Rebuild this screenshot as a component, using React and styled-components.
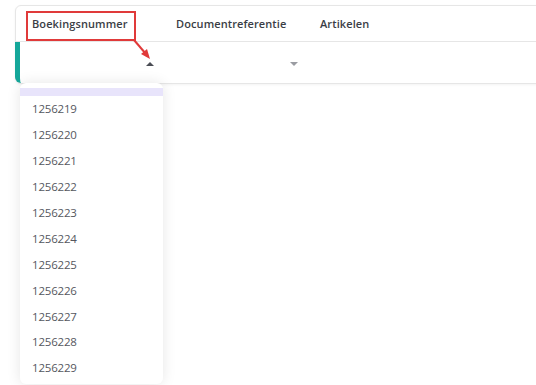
import React from "react";
import styled, { createGlobalStyle } from "styled-components";

const Global = createGlobalStyle`
  html, body { margin: 0; padding: 0; background: #fff; }
  body { font-family: "Open Sans", "Liberation Sans", sans-serif; overflow: hidden; }
  #root { width: 536px; height: 385px; overflow: hidden; }
`;

const Page = styled.div`
  padding: 5px 0 0 15px;
  width: 560px;
  position: relative;
`;

const Card = styled.div`
  border: 1px solid #e6e6e6;
  border-radius: 6px;
  background: #fff;
  box-shadow: 0 1px 3px rgba(0, 0, 0, 0.05);
`;

const HeaderRow = styled.div`
  display: grid;
  grid-template-columns: 144px 144px 1fr;
  height: 35px;
  padding-left: 4px;
  border-bottom: 1px solid #e6e6e6;
`;

const Tab = styled.div`
  display: flex;
  align-items: center;
  padding-left: 12px;
  font-size: 11px;
  font-weight: 600;
  color: #3a3d45;
  letter-spacing: 0.1px;
`;

const FilterRow = styled.div`
  display: grid;
  grid-template-columns: 144px 144px 1fr;
  height: 41px;
  border-left: 5px solid #15a79a;
  margin-left: -1px;
  border-bottom-left-radius: 6px;
`;

const Cell = styled.div`
  position: relative;
  display: flex;
  align-items: center;
  justify-content: flex-end;
  padding-right: 10px;
`;

const Caret = styled.span`
  width: 0;
  height: 0;
  border-left: 4px solid transparent;
  border-right: 4px solid transparent;
  ${(p) =>
    p.$up
      ? `border-bottom: 4px solid #4a4d55;`
      : `border-top: 4px solid #9a9ca2;`}
  margin-top: 2px;
`;

const Dropdown = styled.div`
  position: absolute;
  top: 41px;
  left: 0;
  width: 143px;
  height: 301px;
  background: #fff;
  border-radius: 6px;
  box-shadow: 0 0 14px rgba(0, 0, 0, 0.1);
  padding-top: 5px;
  box-sizing: border-box;
  z-index: 5;
`;

const Highlight = styled.div`
  height: 8px;
  background: #e8e4fb;
`;

const Option = styled.div`
  height: 25.9px;
  display: flex;
  align-items: center;
  padding-left: 12px;
  font-size: 11.5px;
  letter-spacing: -0.2px;
  color: #55575e;
`;

const Annotation = styled.div`
  position: absolute;
  left: 26px;
  top: 11px;
  width: 106px;
  height: 26px;
  border: 2px solid #e03a3a;
  pointer-events: none;
  z-index: 6;
`;

const Arrow = styled.svg`
  position: absolute;
  left: 128px;
  top: 36px;
  z-index: 6;
  overflow: visible;
`;

const options = [
  "1256219", "1256220", "1256221", "1256222", "1256223", "1256224",
  "1256225", "1256226", "1256227", "1256228", "1256229",
];

export default function App() {
  return (
    <>
      <Global />
      <Page>
        <Card>
          <HeaderRow>
            <Tab>Boekingsnummer</Tab>
            <Tab>Documentreferentie</Tab>
            <Tab>Artikelen</Tab>
          </HeaderRow>
          <FilterRow>
            <Cell>
              <Caret $up />
              <Dropdown>
                <Highlight />
                {options.map((o) => (
                  <Option key={o}>{o}</Option>
                ))}
              </Dropdown>
            </Cell>
            <Cell>
              <Caret />
            </Cell>
            <Cell />
          </FilterRow>
        </Card>
        <Annotation />
        <Arrow width="30" height="30" viewBox="0 0 30 30">
          <line x1="6" y1="4" x2="18" y2="18" stroke="#e03a3a" strokeWidth="2" />
          <polygon points="22,23 13,18 19,13" fill="#e03a3a" />
        </Arrow>
      </Page>
    </>
  );
}
